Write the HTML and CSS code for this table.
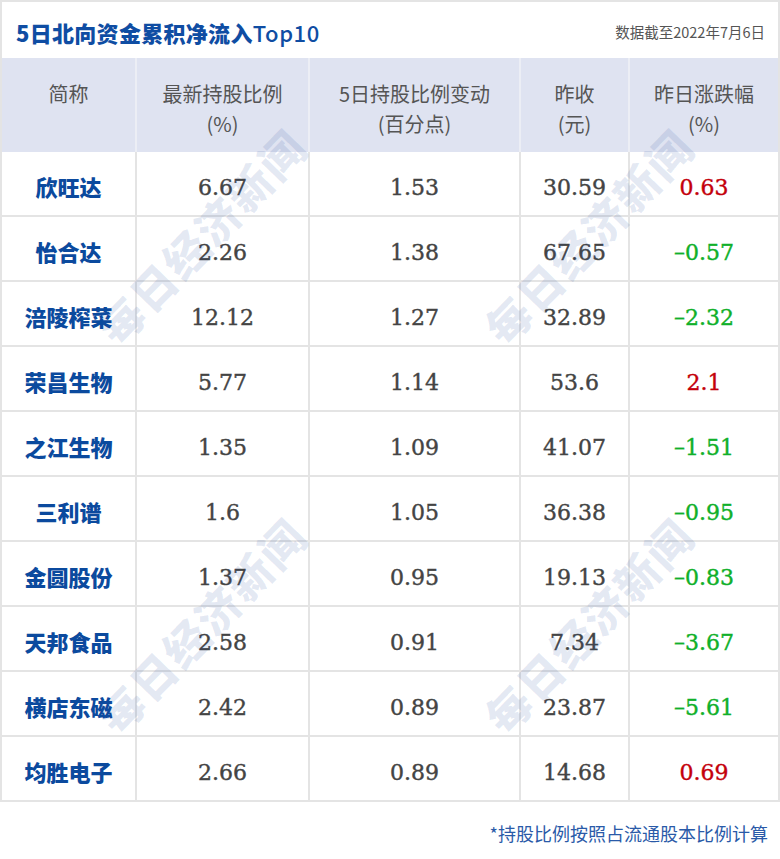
FILE: index.html
```html
<!DOCTYPE html>
<html lang="zh-CN">
<head>
<meta charset="utf-8">
<title>5日北向资金累积净流入Top10</title>
<link rel="stylesheet" href="styles.css">
</head>
<body>
<div class="page">
  <div class="card">
    <div class="title-bar">
      <h1 class="title">5日北向资金累积净流入<span class="title-latin">Top10</span></h1>
      <div class="date">数据截至2022年7月6日</div>
    </div>
    <div class="head">
      <div class="hcell">简称</div>
      <div class="hcell">最新持股比例<br>(%)</div>
      <div class="hcell">5日持股比例变动<br>(百分点)</div>
      <div class="hcell">昨收<br>(元)</div>
      <div class="hcell">昨日涨跌幅<br>(%)</div>
    </div>
    <div class="body">
      <div class="cell name">欣旺达</div><div class="cell num">6.67</div><div class="cell num">1.53</div><div class="cell num">30.59</div><div class="cell num up">0.63</div>
      <div class="cell name">怡合达</div><div class="cell num">2.26</div><div class="cell num">1.38</div><div class="cell num">67.65</div><div class="cell num down">–0.57</div>
      <div class="cell name">涪陵榨菜</div><div class="cell num">12.12</div><div class="cell num">1.27</div><div class="cell num">32.89</div><div class="cell num down">–2.32</div>
      <div class="cell name">荣昌生物</div><div class="cell num">5.77</div><div class="cell num">1.14</div><div class="cell num">53.6</div><div class="cell num up">2.1</div>
      <div class="cell name">之江生物</div><div class="cell num">1.35</div><div class="cell num">1.09</div><div class="cell num">41.07</div><div class="cell num down">–1.51</div>
      <div class="cell name">三利谱</div><div class="cell num">1.6</div><div class="cell num">1.05</div><div class="cell num">36.38</div><div class="cell num down">–0.95</div>
      <div class="cell name">金圆股份</div><div class="cell num">1.37</div><div class="cell num">0.95</div><div class="cell num">19.13</div><div class="cell num down">–0.83</div>
      <div class="cell name">天邦食品</div><div class="cell num">2.58</div><div class="cell num">0.91</div><div class="cell num">7.34</div><div class="cell num down">–3.67</div>
      <div class="cell name">横店东磁</div><div class="cell num">2.42</div><div class="cell num">0.89</div><div class="cell num">23.87</div><div class="cell num down">–5.61</div>
      <div class="cell name">均胜电子</div><div class="cell num">2.66</div><div class="cell num">0.89</div><div class="cell num">14.68</div><div class="cell num up">0.69</div>
    </div>
    <div class="watermarks" aria-hidden="true">
      <span class="wm wm-1">每日经济新闻</span>
      <span class="wm wm-2">每日经济新闻</span>
      <span class="wm wm-3">每日经济新闻</span>
      <span class="wm wm-4">每日经济新闻</span>
    </div>
  </div>
  <div class="note">*持股比例按照占流通股本比例计算</div>
</div>
</body>
</html>
```

FILE: styles.css
```css
* { box-sizing: border-box; }

html, body {
  margin: 0;
  padding: 0;
  background: #ffffff;
}

body {
  font-family: "Noto Sans CJK SC", "Noto Sans", sans-serif;
  color: #555555;
}

.page {
  width: 780px;
}

.card {
  position: relative;
  width: 780px;
  border: 2px solid #e4e4e4;
  overflow: hidden;
}

.title-bar {
  height: 56px;
  display: flex;
  align-items: center;
  justify-content: space-between;
  padding: 4px 13px 0 14px;
  background: #ffffff;
}

.title {
  margin: 0;
  font-size: 22px;
  font-weight: 900;
  line-height: 1;
  color: #0f4da3;
  letter-spacing: 0.3px;
}

.title-latin {
  font-weight: 500;
  letter-spacing: 0.6px;
}

.date {
  font-size: 14.5px;
  color: #555555;
  line-height: 1;
}

.head {
  display: grid;
  grid-template-columns: 133px 171px 209px 107px 148px;
  column-gap: 2px;
  background: #eceef5;
  height: 94px;
}

.hcell {
  background: #dfe3f1;
  text-align: center;
  font-size: 20px;
  line-height: 30px;
  padding-top: 21px;
  color: #555555;
}

.body {
  display: grid;
  grid-template-columns: 133px 171px 209px 107px 148px;
  grid-auto-rows: 63px;
  gap: 2px;
  background: #e4e4e4;
}

.cell {
  background: #ffffff;
  display: flex;
  align-items: center;
  justify-content: center;
  padding-top: 4px;
}

.name {
  font-size: 22px;
  font-weight: 900;
  color: #0b4a9e;
}

.num {
  font-family: "DejaVu Serif", "Liberation Serif", serif;
  font-size: 22px;
  color: #444444;
  -webkit-text-stroke: 0.4px currentColor;
  padding-top: 7px;
}

.up { color: #c4000b; }
.down { color: #10b02a; }

.watermarks {
  position: absolute;
  inset: 0;
  pointer-events: none;
}

.wm {
  position: absolute;
  transform: translate(-50%, -50%) rotate(-46deg);
  font-size: 44px;
  font-weight: 900;
  letter-spacing: 2px;
  white-space: nowrap;
  color: rgba(40, 80, 160, 0.13);
}

.wm-1 { left: 199px; top: 234px; }
.wm-2 { left: 586px; top: 234px; }
.wm-3 { left: 199px; top: 623px; }
.wm-4 { left: 586px; top: 623px; }

.note {
  text-align: right;
  padding: 19px 12px 0 0;
  font-size: 18px;
  line-height: 24px;
  color: #2a5aa8;
}
```
